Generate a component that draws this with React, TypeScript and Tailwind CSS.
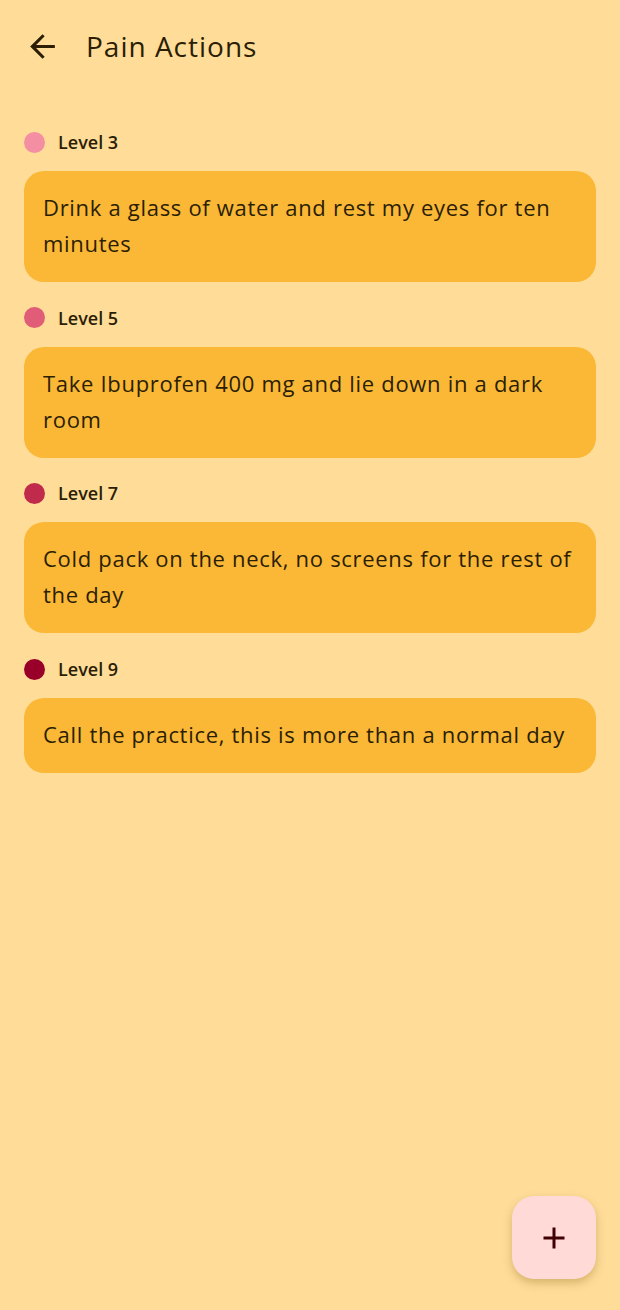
interface PainAction {
  level: number;
  dot: string;
  text: string;
}

const actions: PainAction[] = [
  { level: 3, dot: "bg-[#f48ea2]", text: "Drink a glass of water and rest my eyes for ten minutes" },
  { level: 5, dot: "bg-[#e05c77]", text: "Take Ibuprofen 400 mg and lie down in a dark room" },
  { level: 7, dot: "bg-[#c02a4b]", text: "Cold pack on the neck, no screens for the rest of the day" },
  { level: 9, dot: "bg-[#98002a]", text: "Call the practice, this is more than a normal day" },
];

export default function App() {
  return (
    <div
      className="relative w-[620px] h-[1310px] bg-[#ffdd99] text-[#2b1e04] overflow-hidden"
      style={{ fontFamily: "'Open Sans', 'Noto Sans', sans-serif" }}
    >
      <header className="flex items-center h-[92px] pl-[24px]">
        <svg viewBox="0 0 24 24" className="w-[37px] h-[37px] fill-current">
          <path d="M20 11H7.83l5.59-5.59L12 4l-8 8 8 8 1.41-1.41L7.83 13H20v-2z" />
        </svg>
        <h1 className="ml-[25px] text-[28px] leading-none tracking-[1px]">Pain Actions</h1>
      </header>

      <div className="px-[24px] pt-[38px] flex flex-col gap-[23.7px]">
        {actions.map((a) => (
          <section key={a.level} className="flex flex-col gap-[17px]">
            <div className="flex items-center h-[24px]">
              <span className={`w-[21px] h-[21px] rounded-full ${a.dot}`} />
              <span className="ml-[13px] text-[18px] font-semibold leading-none">Level {a.level}</span>
            </div>
            <div className="bg-[#fab836] rounded-[20px] px-[19px] pt-[18px] pb-[21px] text-[22px] leading-[36px] tracking-[0.7px]">
              {a.text}
            </div>
          </section>
        ))}
      </div>

      <button className="absolute right-[24px] bottom-[31px] w-[84px] h-[83px] rounded-[22px] bg-[#ffdad6] flex items-center justify-center shadow-[0_4px_10px_rgba(120,80,0,0.3)]">
        <svg viewBox="0 0 24 24" className="w-[36px] h-[36px] fill-[#410002]">
          <path d="M19 13h-6v6h-2v-6H5v-2h6V5h2v6h6v2z" />
        </svg>
      </button>
    </div>
  );
}
